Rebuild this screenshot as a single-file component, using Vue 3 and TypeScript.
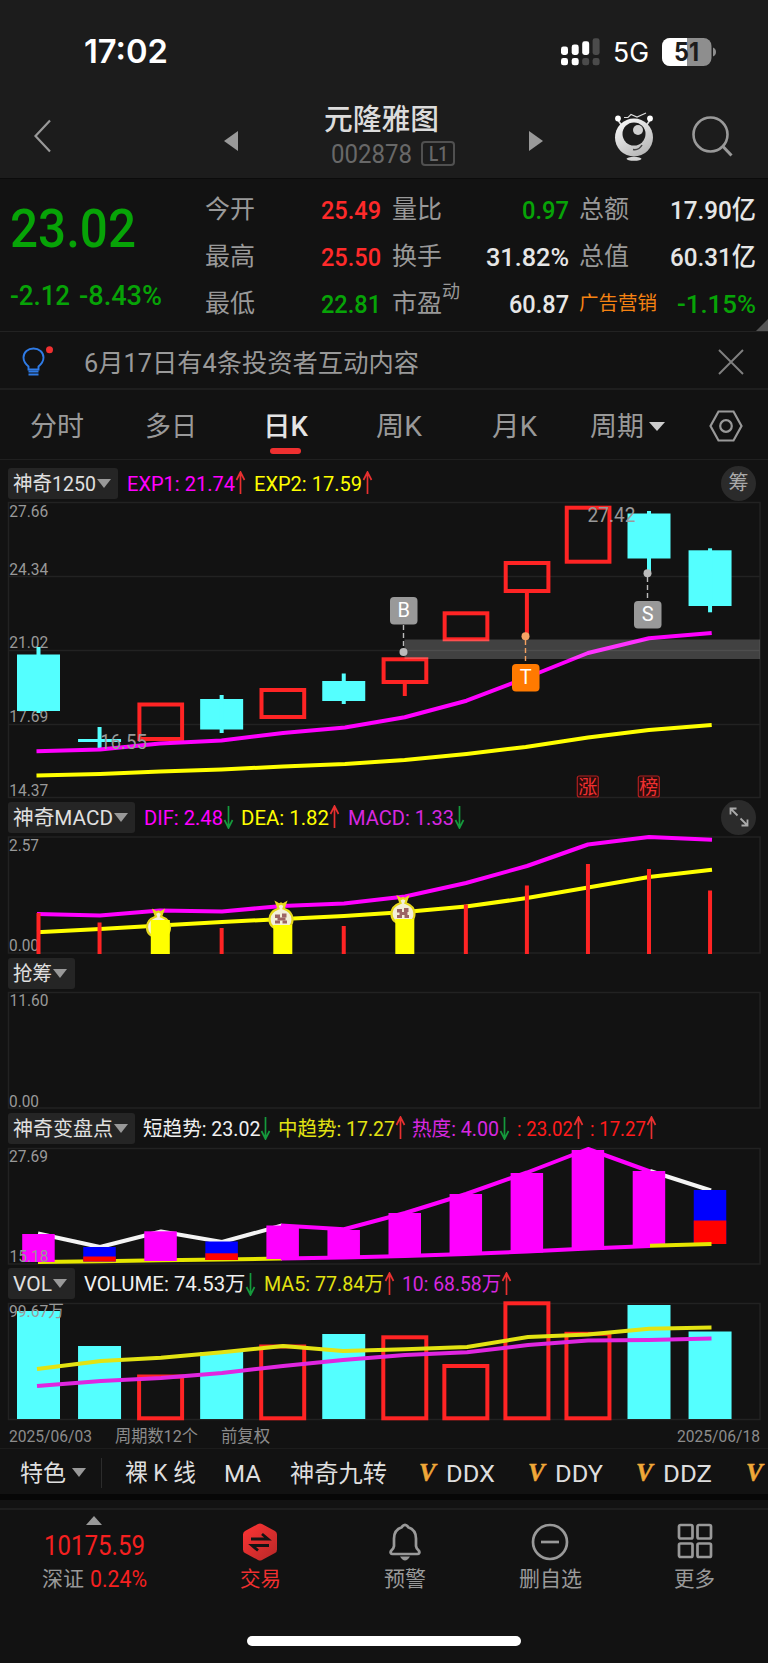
<script setup lang="ts">
import { h } from 'vue'

interface FitProps {
  s: string
  w: number
  size: number
  weight?: number
}

/* One line of text set to an exact advance width. */
const Fit = (p: FitProps) =>
  h('svg', { width: p.w, height: p.size, class: 'fit' }, [
    h(
      'text',
      {
        x: 0,
        y: p.size * 0.86,
        'font-size': p.size,
        'font-weight': p.weight ?? 400,
        textLength: p.w,
        lengthAdjust: 'spacingAndGlyphs',
        fill: 'currentColor',
        'xml:space': 'preserve',
      },
      p.s,
    ),
  ])
Fit.props = ['s', 'w', 'size', 'weight']

interface Legend {
  s: string
  w: number
  c: string
  up: boolean
}
interface Head {
  key: string
  name: string
  nameW: number
  chipW: number
  items: Legend[]
}

const heads: Record<string, Head> = {
  exp: {
    key: 'exp', name: '神奇1250', nameW: 83, chipW: 110,
    items: [
      { s: 'EXP1: 21.74', w: 108, c: 'mag', up: true },
      { s: 'EXP2: 17.59', w: 108, c: 'yel', up: true },
    ],
  },
  macd: {
    key: 'macd', name: '神奇MACD', nameW: 100, chipW: 127,
    items: [
      { s: 'DIF: 2.48', w: 79, c: 'mag', up: false },
      { s: 'DEA: 1.82', w: 88, c: 'yel', up: true },
      { s: 'MACD: 1.33', w: 106, c: 'pur', up: false },
    ],
  },
  chips: { key: 'chips', name: '抢筹', nameW: 39, chipW: 67, items: [] },
  turn: {
    key: 'turn', name: '神奇变盘点', nameW: 100, chipW: 127,
    items: [
      { s: '短趋势: 23.02', w: 117.5, c: 'whi', up: false },
      { s: '中趋势: 17.27', w: 117, c: 'oli', up: true },
      { s: '热度: 4.00', w: 87, c: 'pur', up: false },
      { s: ': 23.02', w: 56, c: 'red', up: true },
      { s: ': 17.27', w: 56, c: 'red', up: true },
    ],
  },
  vol: {
    key: 'vol', name: 'VOL', nameW: 39, chipW: 67,
    items: [
      { s: 'VOLUME: 74.53万', w: 161.5, c: 'whi', up: false },
      { s: 'MA5: 77.84万', w: 120, c: 'oli', up: true },
      { s: '10: 68.58万', w: 99, c: 'pur', up: true },
    ],
  },
}

const quotes = [
  [
    { l: '今开', v: '25.49', w: 60, c: 'up' },
    { l: '最高', v: '25.50', w: 60, c: 'up' },
    { l: '最低', v: '22.81', w: 60, c: 'down' },
  ],
  [
    { l: '量比', v: '0.97', w: 47, c: 'down' },
    { l: '换手', v: '31.82%', w: 83, c: 'val' },
    { l: '市盈', v: '60.87', w: 60, c: 'val', sup: '动' },
  ],
  [
    { l: '总额', v: '17.90亿', w: 86, c: 'val' },
    { l: '总值', v: '60.31亿', w: 86, c: 'val' },
    { l: '广告营销', v: '-1.15%', w: 79, c: 'down', tag: true },
  ],
]

const center = (i: number) => 38.5 + 61.05 * i

/* body top/bottom and wick top/bottom for every session */
const candles = [
  { up: false, t: 654.5, b: 711, wt: 647, wb: 713 },
  { up: false, t: 739, b: 742, wt: 727, wb: 748 },
  { up: true, t: 702.5, b: 741, wt: 702.5, wb: 741 },
  { up: false, t: 699, b: 729.5, wt: 695, wb: 733 },
  { up: true, t: 688, b: 719, wt: 688, wb: 719 },
  { up: false, t: 681, b: 701, wt: 673.5, wb: 704 },
  { up: true, t: 657.3, b: 684, wt: 657.3, wb: 696 },
  { up: true, t: 611.3, b: 641.3, wt: 611.3, wb: 641.3 },
  { up: true, t: 561, b: 593, wt: 561, wb: 635 },
  { up: true, t: 505.7, b: 563.7, wt: 505.7, wb: 563.7 },
  { up: false, t: 513.5, b: 558.5, wt: 511, wb: 572 },
  { up: false, t: 550.3, b: 606, wt: 548.3, wb: 612.3 },
]

const macdBars = [
  { i: 0, t: 913 }, { i: 1, t: 922.5 }, { i: 3, t: 928 }, { i: 5, t: 926 },
  { i: 7, t: 904.5 }, { i: 8, t: 885.5 }, { i: 9, t: 864 }, { i: 10, t: 869 }, { i: 11, t: 890.5 },
]
const bags = [
  { x: 158.5, y: 927, bar: 920, front: false },
  { x: 281, y: 919, bar: 925, front: true },
  { x: 403, y: 913.5, bar: 919, front: true },
]

const trend = [
  { t: 1234, b: 1262 }, { t: 1247, m: 1256.5, b: 1261.5 }, { t: 1231.3, b: 1261 },
  { t: 1241.5, m: 1253.3, b: 1260 }, { t: 1225.5, b: 1259 }, { t: 1230, b: 1258 },
  { t: 1213, b: 1257 }, { t: 1194, b: 1255 }, { t: 1173, b: 1252.5 },
  { t: 1150, b: 1250 }, { t: 1171, b: 1247 }, { t: 1190, m: 1220.5, b: 1244 },
]

const volumes = [
  { up: false, t: 1311 }, { up: false, t: 1346 }, { up: true, t: 1374.5 }, { up: false, t: 1352 },
  { up: true, t: 1344.5 }, { up: false, t: 1334 }, { up: true, t: 1335.3 }, { up: true, t: 1364 },
  { up: true, t: 1301.3 }, { up: true, t: 1331.8 }, { up: false, t: 1305 }, { up: false, t: 1331.5 },
]

const axis = [
  { s: '27.66', y: 516.7 }, { s: '24.34', y: 574.7 }, { s: '21.02', y: 648.3 },
  { s: '17.69', y: 722.3 }, { s: '14.37', y: 795.7 },
]
</script>

<template>
  <div class="screen">
    <header class="top">
      <div class="status">
        <Fit class="clock" s="17:02" :w="84" :size="33" :weight="600" />
        <div class="status-right">
          <svg width="40" height="28" viewBox="0 0 40 28">
            <g fill="#fff">
              <rect x="0" y="8.5" width="7" height="8.5" rx="2.4" />
              <rect x="10.7" y="6.5" width="7" height="10.5" rx="2.4" />
              <rect x="21.2" y="3.3" width="7" height="13.7" rx="2.4" />
              <rect x="0" y="20" width="7" height="7.3" rx="2.4" />
              <rect x="10.7" y="20" width="7" height="7.3" rx="2.4" />
            </g>
            <g fill="#4b4b4b">
              <rect x="31.6" y="0.3" width="7" height="16.7" rx="2.4" />
              <rect x="21.2" y="20" width="7" height="7.3" rx="2.4" />
              <rect x="31.6" y="20" width="7" height="7.3" rx="2.4" />
            </g>
          </svg>
          <Fit class="net" s="5G" :w="36" :size="27" />
          <svg class="battery" width="55" height="28" viewBox="0 0 55 28">
            <defs><clipPath id="cell"><rect width="49.5" height="28" rx="8" /></clipPath></defs>
            <g clip-path="url(#cell)">
              <rect width="50" height="28" fill="#8e8e8e" />
              <rect width="25" height="28" fill="#fff" />
            </g>
            <path d="M51 9.5q3 1.2 3 4.500t-3 4.500z" fill="#8e8e8e" />
            <text x="12" y="22.8" font-size="25" font-weight="700" textLength="25" lengthAdjust="spacingAndGlyphs" fill="#1c1c1c">51</text>
          </svg>
        </div>
      </div>
      <div class="nav">
        <svg class="back" width="20" height="34" viewBox="0 0 20 34"><path d="M17 1.500 2.500 17 17 32.500" fill="none" stroke="#999" stroke-width="2.200" /></svg>
        <svg class="prev" width="14" height="20" viewBox="0 0 14 20"><path d="M14 0v20L0 10z" fill="#999" /></svg>
        <div class="title">
          <Fit class="name" s="元隆雅图" :w="115" :size="29" :weight="500" />
          <div class="code"><Fit s="002878" :w="81" :size="25" /><span class="lv"><Fit s="L1" :w="19" :size="20" :weight="500" /></span></div>
        </div>
        <svg class="next" width="14" height="20" viewBox="0 0 14 20"><path d="M0 0v20l14-10z" fill="#999" /></svg>
        <svg class="robot" width="42" height="50" viewBox="0 0 42 50">
          <defs><linearGradient id="head" x1="0" y1="0" x2="0.6" y2="1"><stop offset="0" stop-color="#fff" /><stop offset="1" stop-color="#b9b9b9" /></linearGradient></defs>
          <path d="M4 8l4 6M36 8l-4 6" stroke="#ddd" stroke-width="1.600" />
          <circle cx="4" cy="6.500" r="2.900" fill="#fff" /><circle cx="36" cy="6.500" r="2.900" fill="#fff" />
          <path d="M10 5.500h4l3-3 6 2.600L32 1" fill="none" stroke="#ddd" stroke-width="1.100" />
          <circle cx="20" cy="25.500" r="19" fill="url(#head)" />
          <circle cx="20" cy="22" r="11.500" fill="#1c1c1c" />
          <circle cx="24" cy="18" r="5" fill="#d0d0d0" />
          <path d="M19 37.500q6 1 9-4.500" fill="none" stroke="#444" stroke-width="1.500" />
          <ellipse cx="20" cy="46.800" rx="7.500" ry="2" fill="#d4d4d4" />
        </svg>
        <svg class="search" width="42" height="42" viewBox="0 0 42 42"><g fill="none" stroke="#999" stroke-width="2.600"><circle cx="18.500" cy="18.500" r="17" /><path d="m31 30.500 8.500 9" stroke-width="3" /></g></svg>
      </div>
    </header>

    <section class="quote">
      <div class="price">
        <Fit class="last" s="23.02" :w="126" :size="54" :weight="500" />
        <div class="delta"><Fit s="-2.12" :w="60" :size="27" :weight="500" /><Fit s="-8.43%" :w="83" :size="27" :weight="500" /></div>
      </div>
      <div v-for="(col, k) in quotes" :key="k" class="qcol">
        <div v-for="q in col" :key="q.l" class="qrow">
          <span :class="['ql', { tag: 'tag' in q }]">{{ q.l }}<sup v-if="'sup' in q">{{ q.sup }}</sup></span>
          <Fit :class="q.c" :s="q.v" :w="q.w" :size="26.5" :weight="500" />
        </div>
      </div>
      <i class="corner"></i>
    </section>

    <section class="notice">
      <svg width="32" height="32" viewBox="0 0 32 32">
        <g fill="none" stroke="#2f7be6" stroke-width="1.900">
          <path d="M6.500 23.500v-3C3 17.500 1.500 15 1.500 11.500 1.500 6 6 2.500 11.500 2.500S21.500 6 21.500 11.500c0 3.500-1.500 6-5 9v3z" />
          <path d="M6.500 25.500h10M6.500 28.500h10" />
        </g>
        <circle cx="27.500" cy="3.800" r="3.500" fill="#f03030" />
      </svg>
      <Fit class="ntext" s="6月17日有4条投资者互动内容" :w="335" :size="25.5" />
      <svg class="close" width="26" height="26" viewBox="0 0 26 26"><path d="M1 1l24 24M25 1 1 25" stroke="#808080" stroke-width="1.900" /></svg>
    </section>

    <nav class="tabs">
      <span class="t1"><Fit s="分时" :w="54" :size="27" /></span>
      <span class="t2"><Fit s="多日" :w="52" :size="27" /></span>
      <span class="t3 on"><Fit s="日K" :w="45" :size="27" :weight="500" /><i></i></span>
      <span class="t4"><Fit s="周K" :w="46" :size="27" /></span>
      <span class="t5"><Fit s="月K" :w="45" :size="27" /></span>
      <span class="t6"><Fit s="周期" :w="54" :size="27" /><b></b></span>
      <svg class="hex" width="34" height="32" viewBox="0 0 34 32"><g fill="none" stroke="#999" stroke-width="2.200"><path d="M9.500 1.500h15L32.500 16l-8 14.500h-15L1.500 16z" /><circle cx="17" cy="16" r="5.800" /></g></svg>
    </nav>

    <template v-for="hd in heads" :key="hd.key">
      <div :class="['head', hd.key]">
        <span class="chip" :style="{ width: hd.chipW + 'px' }"><Fit :s="hd.name" :w="hd.nameW" :size="20.5" /><b></b></span>
        <template v-for="(it, k) in hd.items" :key="k">
          <Fit :class="['leg', it.c]" :s="it.s" :w="it.w" :size="20.5" />
          <svg class="arrow" width="11" height="24" viewBox="0 0 11 24">
            <path v-if="it.up" d="M5.500 23V2M1.500 9l4-8 4 8" fill="none" stroke="#e83030" stroke-width="1.700" />
            <path v-else d="M5.500 1v21M1.500 15l4 8 4-8" fill="none" stroke="#159a3c" stroke-width="1.700" />
          </svg>
        </template>
        <span v-if="hd.key === 'exp'" class="round">筹</span>
        <span v-if="hd.key === 'macd'" class="round">
          <svg width="20" height="20" viewBox="0 0 20 20"><path d="M8.500 8.500 1.500 1.500M1.500 7.500v-6h6M11.500 11.500l7 7M18.500 12.500v6h-6" fill="none" stroke="#aaa" stroke-width="1.800" /></svg>
        </span>
      </div>

      <svg v-if="hd.key === 'exp'" class="panel" width="768" height="299" viewBox="0 500 768 299">
        <rect class="frame" x="8.500" y="502.500" width="751.500" height="295" />
        <path class="frame" d="M8 576.500h752M8 650.500h752M8 724.500h752" />
        <text v-for="a in axis" :key="a.s" class="ax" x="9.300" :y="a.y" textLength="39" lengthAdjust="spacingAndGlyphs">{{ a.s }}</text>
        <g v-for="(c, i) in candles" :key="i">
          <template v-if="c.up">
            <rect :x="center(i) - 21.2" :y="c.t + 2" width="42.700" :height="c.b - c.t - 4" fill="none" stroke="#ff2424" stroke-width="4" />
            <rect v-if="c.wb > c.b" :x="center(i) - 2" :y="c.b" width="4" :height="c.wb - c.b" fill="#ff2424" />
          </template>
          <template v-else>
            <rect :x="center(i) - 21.5" :y="c.t" width="43" :height="c.b - c.t" fill="#54ffff" />
            <rect :x="center(i) - 2" :y="c.wt" width="4" :height="c.wb - c.wt" fill="#54ffff" />
          </template>
        </g>
        <polyline class="ln" stroke="#ff00ff" points="36.500,751.300 100,749.500 160,743.500 221.500,740.500 283,733 345,727.500 404.700,717.300 466.500,700.700 525.700,678 588,653 649,638.300 711.700,633" />
        <polyline class="ln" stroke="#ffff00" points="36.500,775.500 100,774 160,771.500 221.500,769.500 283,766.500 345,764 404.700,760 466.500,754 525.700,747 588,737.500 649,730 711.700,725" />
        <text class="ax mark" x="100" y="748.500" textLength="47" lengthAdjust="spacingAndGlyphs">16.55</text>
        <text class="ax mark" x="587.500" y="522" textLength="48" lengthAdjust="spacingAndGlyphs">27.42</text>
        <rect x="404.500" y="639.500" width="355.500" height="19.500" fill="#fff" opacity="0.2" />
        <g stroke-width="1.400" stroke-dasharray="5 3">
          <path d="M403.500 625v26M647.500 577v24" stroke="#bbb" />
          <path d="M525.500 640v24" stroke="#f5a060" />
        </g>
        <circle cx="403.500" cy="652" r="4" fill="#bbb" />
        <circle cx="647.500" cy="573.300" r="4" fill="#bbb" />
        <circle cx="525.500" cy="636.200" r="4" fill="#f5a566" />
        <g class="badge">
          <rect x="390" y="597" width="27.500" height="27.500" rx="4" fill="#999" /><text x="403.700" y="617">B</text>
          <rect x="634" y="601" width="27.500" height="27.500" rx="4" fill="#999" /><text x="647.700" y="621">S</text>
          <rect x="512" y="664" width="27.500" height="27.500" rx="4" fill="#ff7a00" /><text x="525.700" y="684">T</text>
        </g>
        <g class="seal">
          <rect x="577.300" y="776" width="21" height="21" rx="2" /><text x="587.800" y="793.700">涨</text>
          <rect x="638.300" y="776" width="21" height="21" rx="2" /><text x="648.800" y="793.700">榜</text>
        </g>
      </svg>

      <svg v-else-if="hd.key === 'macd'" class="panel" width="768" height="120" viewBox="0 835 768 120">
        <rect class="frame" x="8.500" y="837" width="751.500" height="116" />
        <text class="ax" x="9" y="850.700" textLength="30" lengthAdjust="spacingAndGlyphs">2.57</text>
        <text class="ax" x="9" y="951" textLength="30" lengthAdjust="spacingAndGlyphs">0.00</text>
        <polyline class="ln" stroke="#ff00ff" points="37,914 100,915.500 160,910.500 222,911.500 282,906 344,903.500 405,896.500 466,883 527,866 588,844.500 649,837 712,839.700" />
        <polyline class="ln" stroke="#ffff00" points="37,932.300 100,929 160,925.500 222,922 283,919 344,916 405,912 466,906.500 527,898 588,887.500 649,877 712,869.700" />
        <rect v-for="m in macdBars" :key="m.i" :x="center(m.i) - 2" :y="m.t" width="4" :height="954 - m.t" fill="#ff2424" />
        <g v-for="g in bags" :key="g.x">
          <path :transform="`translate(${g.x} ${g.y})`" d="M-4.500-16l2.500 1.500 2-1 2 1 2.500-1.500-2 5.500c5.500 2 9 6 9 10.500 0 7-4 10-11.500 10S-11.500 7-11.500 0c0-4.500 3.500-8.500 9-10.500z" fill="#f4f0d8" stroke="#e6d81c" stroke-width="2.200" />
          <g v-if="g.front" :transform="`translate(${g.x} ${g.y})`" fill="#9c6464">
            <rect x="-6" y="-4.500" width="5" height="3.500" /><rect x="1" y="-5.500" width="4.500" height="4" />
            <rect x="-3.500" y="-1.500" width="8" height="3" /><rect x="-6" y="1.500" width="5" height="3" /><rect x="1.500" y="1.500" width="4.500" height="3" />
          </g>
          <rect :x="g.x - 7.700" :y="g.bar" width="19" :height="954 - g.bar" fill="#ffff00" />
        </g>
      </svg>

      <svg v-else-if="hd.key === 'chips'" class="panel" width="768" height="120" viewBox="0 990 768 120">
        <rect class="frame" x="8.500" y="992.500" width="751.500" height="115.500" />
        <text class="ax" x="9.500" y="1006.300" textLength="39" lengthAdjust="spacingAndGlyphs">11.60</text>
        <text class="ax" x="9" y="1106.500" textLength="30" lengthAdjust="spacingAndGlyphs">0.00</text>
      </svg>

      <svg v-else-if="hd.key === 'turn'" class="panel" width="768" height="120" viewBox="0 1146 768 120">
        <rect class="frame" x="8.500" y="1148.500" width="751.500" height="115.500" />
        <text class="ax" x="9" y="1162" textLength="39" lengthAdjust="spacingAndGlyphs">27.69</text>
        <polyline class="ln" stroke="#f4f4f4" points="38,1233.500 100,1247 161,1231.500 222,1242 282,1225.500" />
        <polyline class="ln" stroke="#f4f4f4" points="650,1171 711,1190.500" />
        <polyline class="ln" stroke="#e6e600" points="38,1262 100,1261.300 161,1260.300 222,1259.500 282,1258.500" />
        <g v-for="(c, i) in trend" :key="i">
          <rect :x="center(i) - 16.3" :y="c.t" width="32.500" :height="c.b - c.t" :fill="c.m ? '#0000ff' : '#ff00ff'" />
          <rect v-if="c.m" :x="center(i) - 16.3" :y="c.m" width="32.500" :height="c.b - c.m" fill="#ff0000" />
        </g>
        <polyline class="ln" stroke="#ff00ff" points="281,1225.500 344,1229.300 405,1213 466,1194 527,1172.500 588,1149 650,1171.500" />
        <polyline class="ln" stroke="#ff00ff" points="281,1258.500 344,1257.500 405,1256 466,1254 527,1251.500 588,1248.500 650,1246" />
        <polyline class="ln" stroke="#e6e600" points="650,1245.700 711.500,1244" />
        <text class="ax" x="9.500" y="1262" textLength="39" lengthAdjust="spacingAndGlyphs">15.18</text>
      </svg>

      <svg v-else class="panel" width="768" height="121" viewBox="0 1300 768 121">
        <rect class="frame" x="8.500" y="1303.500" width="751.500" height="116" />
        <g v-for="(c, i) in volumes" :key="i">
          <rect v-if="c.up" :x="center(i) - 21.5" :y="c.t + 2" width="43" :height="1418.300 - c.t - 2" fill="none" stroke="#ff2424" stroke-width="4" />
          <rect v-else :x="center(i) - 21.5" :y="c.t" width="43" :height="1419 - c.t" fill="#54ffff" />
        </g>
        <text class="ax" x="9" y="1317" textLength="55" lengthAdjust="spacingAndGlyphs">99.67万</text>
        <polyline class="ln" stroke="#e3e312" points="37,1369 101,1361 161,1357.700 222,1352.300 283,1346 343,1351 405,1349.300 467,1347 528,1337 588,1334.500 649,1328.700 711.500,1327.500" />
        <polyline class="ln" stroke="#e026e0" points="37,1386 101,1381 161,1378 222,1373 283,1366 343,1360 405,1355 467,1352.300 528,1345 588,1340.500 649,1340 711.500,1338.500" />
      </svg>
    </template>

    <div class="dates">
      <Fit s="2025/06/03" :w="83" :size="17" /><Fit s="周期数12个" :w="83" :size="17" /><Fit s="前复权" :w="49" :size="17" />
      <Fit class="end" s="2025/06/18" :w="83" :size="17" />
    </div>

    <div class="tools">
      <Fit class="w1" s="特色" :w="46" :size="23" /><b></b><i></i>
      <Fit class="w2" s="裸 K 线" :w="71" :size="23.5" /><Fit class="w3" s="MA" :w="37" :size="24" /><Fit class="w4" s="神奇九转" :w="97" :size="24" />
      <em class="v1">V</em><Fit s="DDX" :w="49" :size="24" />
      <em class="v2">V</em><Fit s="DDY" :w="48" :size="24" />
      <em class="v3">V</em><Fit s="DDZ" :w="49" :size="24" />
      <em class="v4">V</em>
    </div>
    <div class="strip"></div>

    <footer class="foot">
      <div class="cell index">
        <b></b>
        <Fit class="idx" s="10175.59" :w="101" :size="27" />
        <div class="sub"><Fit s="深证" :w="42" :size="21" /><Fit class="idx" s="0.24%" :w="57" :size="23" /></div>
      </div>
      <div class="cell deal">
        <svg width="36" height="38" viewBox="0 0 36 38">
          <defs><linearGradient id="hexa" x1="0" y1="0" x2="1" y2="1"><stop offset="0" stop-color="#ff3434" /><stop offset="1" stop-color="#b82828" /></linearGradient></defs>
          <path d="M16 1q2-1 4 0l13 7q2 1 2 3.500v15q0 2.500-2 3.500l-13 7q-2 1-4 0L3 30q-2-1-2-3.500v-15Q1 9 3 8z" fill="url(#hexa)" />
          <path d="M9 16h17l-6-5M27 22.500H10l6 5" fill="none" stroke="#141414" stroke-width="2.800" />
        </svg>
        <Fit s="交易" :w="41" :size="21" />
      </div>
      <div class="cell bell">
        <svg width="34" height="38" viewBox="0 0 34 38">
          <path d="M17 1.800c1.800 0 2.600 1.300 3.200 2.400 5.200 1.700 7.800 5.800 7.800 11.300v7.500q.3 2.500 2.600 4.500c1.600 1.700.6 3.500-1.300 3.500H4.700c-1.900 0-2.900-1.800-1.300-3.500Q5.700 25.500 6 23v-7.500C6 10 8.600 5.900 13.800 4.200 14.400 3.100 15.200 1.800 17 1.800z" fill="none" stroke="#999" stroke-width="2.700" />
          <path d="M12 33.500h10q-2.500 4-5 4t-5-4z" fill="#999" />
        </svg>
        <Fit s="预警" :w="42" :size="21" />
      </div>
      <div class="cell del">
        <svg width="38" height="38" viewBox="0 0 38 38"><g fill="none" stroke="#999" stroke-width="2.700"><circle cx="19" cy="19" r="17" /><path d="M10 19h18" /></g></svg>
        <Fit s="删自选" :w="63" :size="21" />
      </div>
      <div class="cell more">
        <svg width="36" height="36" viewBox="0 0 36 36"><g fill="none" stroke="#999" stroke-width="2.700"><rect x="2" y="2" width="13.500" height="13.500" rx="1.500" /><rect x="20.500" y="2" width="13.500" height="13.500" rx="1.500" /><rect x="2" y="20.500" width="13.500" height="13.500" rx="1.500" /><rect x="20.500" y="20.500" width="13.500" height="13.500" rx="1.500" /></g></svg>
        <Fit s="更多" :w="41" :size="21" />
      </div>
    </footer>
    <div class="home"></div>
  </div>
</template>

<style>
html,
body {
  background: #121212;
}
</style>

<style scoped>
.screen {
  width: 768px;
  height: 1663px;
  overflow: hidden;
  background: #121212;
  color: #999;
  font-family: Roboto, 'Noto Sans CJK SC', sans-serif;
  display: flex;
  flex-direction: column;
}
.screen > * { flex: none; }
svg { display: block; flex: none; }
.fit { overflow: visible; }

.top { height: 179px; background: #1c1c1c; box-sizing: border-box; border-bottom: 1px solid #0b0b0b; }
.status {
  height: 102px;
  box-sizing: border-box;
  padding: 1px 51px 0 84px;
  display: flex;
  justify-content: space-between;
  align-items: center;
  color: #fff;
  font-family: Inter, sans-serif;
}
.status-right { display: flex; align-items: center; }
.net { margin: 2px 13px 0 12px; }
.nav { display: flex; }
.back { margin: 17px 0 0 33px; }
.prev { margin: 29px 0 0 171px; }
.title { width: 140px; margin: 3px 0 0 83px; display: flex; flex-direction: column; color: #dcdcdc; }
.name { margin-left: 3px; }
.code { display: flex; align-items: center; margin: 7px 0 0 10px; color: #686868; }
.lv {
  margin-left: 9px;
  width: 30px;
  height: 21px;
  border: 2px solid #505050;
  border-radius: 4px;
  display: flex;
  align-items: center;
  justify-content: center;
}
.next { margin: 29px 0 0 68px; }
.robot { margin: 10px 0 0 71px; }
.search { margin: 14px 0 0 36px; }

.quote { height: 153px; display: flex; box-sizing: border-box; border-bottom: 1px solid #222; position: relative; }
.price { box-sizing: border-box; width: 205px; padding: 22px 0 0 10px; color: #07a307; }
.delta { display: flex; gap: 9px; margin-top: 27px; }
.qcol { display: flex; flex-direction: column; padding-top: 7px; }
.qcol:nth-child(2) { width: 176px; margin-right: 11px; }
.qcol:nth-child(3) { width: 177px; margin-right: 10px; }
.qcol:nth-child(4) { width: 177px; }
.qrow { height: 47px; display: flex; justify-content: space-between; align-items: center; }
.ql { font-size: 25px; line-height: 47px; white-space: nowrap; display: flex; }
.ql sup { font-size: 18px; line-height: 24px; }
.ql.tag { font-size: 19.500px; color: #f58212; }
.up { color: #ff2a2a; }
.down { color: #07a307; }
.val { color: #e6e6e6; }
.corner { position: absolute; right: 0; bottom: 0; border: 6px solid #555; border-top-color: transparent; border-left-color: transparent; }

.notice { height: 58px; box-sizing: border-box; border-bottom: 2px solid #1e1e1e; display: flex; align-items: center; padding: 4px 0 0 22px; }
.ntext { margin: 2px 0 0 30px; color: #999; }
.close { margin-left: 299px; }

.tabs { height: 70px; box-sizing: border-box; border-bottom: 1px solid #202020; display: flex; align-items: center; padding: 3px 0 0 30px; }
.tabs span { display: flex; align-items: center; position: relative; }
.t2 { margin-left: 61px; }
.t3 { margin-left: 66px; }
.t4 { margin-left: 68px; }
.t5 { margin-left: 70px; }
.t6 { margin-left: 53px; }
.on { color: #e4e4e4; }
.on i { position: absolute; left: 7px; top: 35px; width: 31px; height: 6px; border-radius: 3px; background: #ee3030; }
.t6 b { margin-left: 5px; border: 8px solid transparent; border-top: 9px solid #ccc; border-bottom: 0; }
.hex { margin-left: 44px; }

.head { display: flex; align-items: center; padding-left: 8px; box-sizing: border-box; position: relative; }
.head.exp { height: 40px; padding-top: 6px; }
.head.macd { height: 36px; }
.head.chips { height: 35px; padding-top: 1px; }
.head.turn { height: 36px; }
.head.vol { height: 34px; padding-top: 1px; }
.chip { height: 31px; box-sizing: border-box; border-radius: 3px; background: #252525; color: #e0e0e0; display: flex; align-items: center; padding-left: 5px; margin-right: 1px; }
.chip b { margin-left: 1px; border: 7.500px solid transparent; border-top: 9px solid #999; border-bottom: 0; }
.leg { margin-left: 7.500px; }
.turn .leg { margin-left: 6.500px; }
.exp .leg { margin-left: 8px; }
.mag { color: #ff00ff; }
.yel { color: #ffff00; }
.pur { color: #d828e0; }
.whi { color: #f0f0f0; }
.oli { color: #e3e312; }
.red { color: #ff1c1c; }
.round {
  width: 35px;
  height: 35px;
  border-radius: 50%;
  background: #2b2b2b;
  color: #aaa;
  font-size: 20px;
  line-height: 20px;
  display: flex;
  align-items: center;
  justify-content: center;
  margin-left: auto;
  margin-right: 12px;
}

.frame { fill: none; stroke: #222; stroke-width: 1.500; }
.ax { font-size: 17px; fill: #999; }
.mark { font-size: 20px; }
.ln { fill: none; stroke-width: 4; stroke-linejoin: round; }
.badge text { font-size: 20px; fill: #fff; text-anchor: middle; }
.seal rect { fill: #2a0c0c; stroke: #b02020; stroke-width: 1.200; }
.seal text { font-size: 19px; fill: #f03030; text-anchor: middle; }

.dates { height: 28px; box-sizing: border-box; border-bottom: 1px solid #1c1c1c; display: flex; align-items: center; padding: 1px 8px 0 9px; gap: 23px; color: #8c8c8c; }
.dates .end { margin-left: auto; }
.tools { height: 45px; display: flex; align-items: center; padding: 2px 0 0 20px; color: #dedede; overflow: hidden; box-sizing: border-box; }
.tools b { margin-left: 6px; border: 7px solid transparent; border-top: 9px solid #999; border-bottom: 0; }
.tools i { width: 1px; height: 30px; background: #2c2c2c; margin: 0 23px 0 15px; flex: none; }
.w3 { margin-left: 28px; }
.w4 { margin-left: 29px; }
.tools em {
  font: italic 700 25px 'Liberation Serif', serif;
  line-height: 26px;
  color: #f0a838;
  -webkit-text-stroke: 0.5px #f0a838;
  width: 18px;
  margin-right: 8px;
  margin-left: 33px;
  flex: none;
  text-indent: -1px;
}
.tools .v2 { margin-left: 34px; }
.tools .v3 { margin-left: 34px; }
.tools .v4 { margin-left: 35px; }
.strip { height: 6px; background: #070707; }

.foot { margin-top: 8px; border-top: 2px solid #1e1e1e; height: 126px; display: flex; }
.cell { display: flex; flex-direction: column; align-items: center; }
.index { width: 189px; padding-top: 6px; box-sizing: border-box; }
.index b { border: 8.500px solid transparent; border-bottom: 9px solid #999; border-top: 0; margin-bottom: 7px; }
.sub { display: flex; align-items: center; gap: 6px; margin-top: 9px; height: 21px; }
.idx { color: #f52020; }
.deal { width: 144px; color: #f03030; }
.deal, .bell, .del, .more { padding-top: 13px; }
.bell { width: 147px; }
.del { width: 143px; }
.more { width: 147px; }
.cell > .fit:last-child { margin-top: 7px; }
.more > .fit:last-child { margin-top: 9px; }
.home { width: 274px; height: 10px; border-radius: 5px; background: #fff; margin-left: 247px; }
</style>
